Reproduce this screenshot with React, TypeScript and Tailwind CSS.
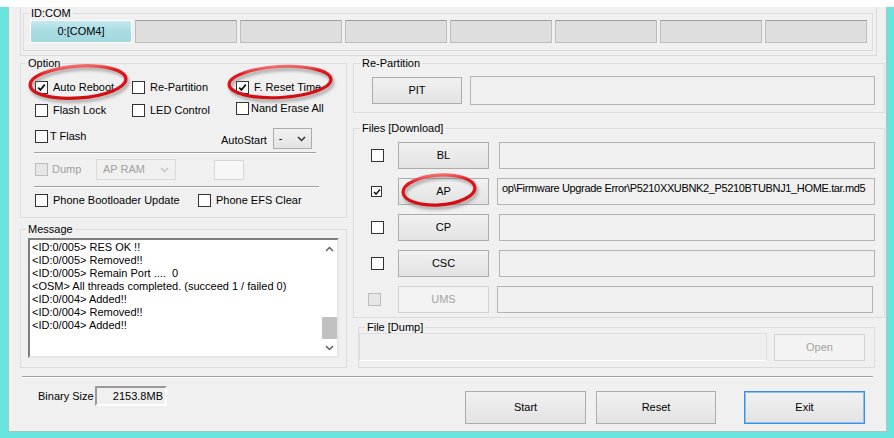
import React from "react";
import clsx from "clsx";

type CheckProps = { checked?: boolean; disabled?: boolean; small?: boolean };

const Check = ({ checked, disabled, small }: CheckProps) => (
  <span
    className={clsx(
      "flex shrink-0 items-center justify-center border",
      small ? "h-[11px] w-[11px]" : "h-[13px] w-[13px]",
      disabled ? "border-[#bcbcbc] bg-[#e6e6e6]" : "border-[#333333] bg-white"
    )}
  >
    {checked && (
      <svg viewBox="0 0 9 9" className={small ? "h-[8px] w-[8px]" : "h-[9px] w-[9px]"}>
        <path d="M1.2 4.6 L3.4 6.9 L7.8 1.6" stroke="#111" strokeWidth="1.7" fill="none" />
      </svg>
    )}
  </span>
);

const CheckLabel = ({
  label,
  checked,
  gap = "gap-[5px]",
  className,
}: {
  label: string;
  checked?: boolean;
  gap?: string;
  className?: string;
}) => (
  <div className={clsx("flex items-center whitespace-nowrap", gap, className)}>
    <Check checked={checked} />
    <span>{label}</span>
  </div>
);

const Btn = ({
  children,
  className,
  disabled,
}: {
  children: React.ReactNode;
  className?: string;
  disabled?: boolean;
}) => (
  <div
    className={clsx(
      "flex shrink-0 items-center justify-center border",
      disabled
        ? "border-[#d2d2d2] bg-[#f3f3f3] text-[#a3a3a3]"
        : "border-[#acacac] bg-linear-to-b from-[#f1f1f1] to-[#e3e3e3]",
      className
    )}
  >
    {children}
  </div>
);

const Field = ({ children, className }: { children?: React.ReactNode; className?: string }) => (
  <div className={clsx("min-w-0 border border-[#b4b4b4] bg-[#f0f0f0]", className)}>{children}</div>
);

const Chevron = ({ color = "#333", up }: { color?: string; up?: boolean }) => (
  <svg viewBox="0 0 9 6" className="h-[6px] w-[9px]">
    <path
      d={up ? "M1 5 L4.5 1.5 L8 5" : "M1 1 L4.5 4.5 L8 1"}
      stroke={color}
      strokeWidth="1.5"
      fill="none"
    />
  </svg>
);

const Legend = ({ children, ml = "ml-[5px]" }: { children: React.ReactNode; ml?: string }) => (
  <legend className={clsx("px-[2px] leading-[12px]", ml)}>{children}</legend>
);

const Etch = ({ width }: { width: string }) => (
  <div className={clsx("h-[2px] border-t border-b border-t-[#a0a0a0] border-b-white", width)} />
);

const messages = [
  "<ID:0/005> RES OK !!",
  "<ID:0/005> Removed!!",
  "<ID:0/005> Remain Port ....  0",
  "<OSM> All threads completed. (succeed 1 / failed 0)",
  "<ID:0/004> Added!!",
  "<ID:0/004> Removed!!",
  "<ID:0/004> Added!!",
];

const files = [
  { name: "BL" },
  { name: "AP", checked: true, path: "op\\Firmware Upgrade Error\\P5210XXUBNK2_P5210BTUBNJ1_HOME.tar.md5" },
  { name: "CP" },
  { name: "CSC" },
  { name: "UMS", disabled: true },
];

const OptionBox = () => (
  <fieldset className="w-full min-w-0 border border-[#dcdcdc]">
    <Legend>Option</Legend>
    <div className="pb-[10px] pl-[14px]">
      <div className="mt-[12px] flex h-[13px] items-center">
        <CheckLabel label="Auto Reboot" checked className="w-[97px]" />
        <CheckLabel label="Re-Partition" className="w-[104px]" />
        <CheckLabel label="F. Reset Time" checked />
      </div>
      <div className="mt-[10px] flex h-[13px] items-center">
        <CheckLabel label="Flash Lock" className="w-[97px]" />
        <CheckLabel label="LED Control" className="w-[104px]" />
        <CheckLabel label="Nand Erase All" gap="gap-[2px]" className="-mt-[4px]" />
      </div>
      <div className="mt-[11px] flex h-[21px] items-start">
        <CheckLabel label="T Flash" gap="gap-[2px]" className="w-[186px]" />
        <div className="flex items-center gap-[6px]">
          <span className="pt-[3px]">AutoStart</span>
          <div className="flex h-[21px] w-[39px] items-center justify-between border border-[#acacac] bg-linear-to-b from-[#f1f1f1] to-[#e3e3e3] pl-[5px] pr-[5px]">
            <span>-</span>
            <Chevron />
          </div>
        </div>
      </div>
      <div className="mt-[3px] -ml-[1px]">
        <Etch width="w-[282px]" />
      </div>
      <div className="mt-[5px] flex h-[21px] items-center">
        <div className="flex w-[61px] items-center gap-[4px] text-[#a0a0a0]">
          <Check disabled />
          <span>Dump</span>
        </div>
        <div className="flex h-[21px] w-[80px] items-center justify-between border border-[#d9d9d9] bg-[#f0f0f0] pl-[6px] pr-[6px] text-[#a0a0a0]">
          <span>AP RAM</span>
          <Chevron color="#c4c4c4" />
        </div>
        <div className="ml-[38px] h-[20px] w-[30px] border border-[#d6d6d6] bg-[#f7f7f7]" />
      </div>
      <div className="mt-[6px] -ml-[1px]">
        <Etch width="w-[285px]" />
      </div>
      <div className="mt-[6px] flex h-[13px] items-center">
        <CheckLabel label="Phone Bootloader Update" className="w-[163px]" />
        <CheckLabel label="Phone EFS Clear" />
      </div>
    </div>
  </fieldset>
);

const MessageBox = () => (
  <fieldset className="mt-[5px] w-full min-w-0 border border-[#dcdcdc]">
    <Legend>Message</Legend>
    <div className="px-[7px] pb-[9px]">
      <div className="mt-[3px] flex h-[120px] w-[311px] border-2 border-t-[#7d7d7d] border-l-[#7d7d7d] border-r-[#e6e6e6] border-b-[#e6e6e6] bg-white">
        <div className="min-w-0 flex-1 overflow-hidden pl-[2px] pt-[1px] leading-[13px] whitespace-pre">
          {messages.map((m, i) => (
            <div key={i}>{m}</div>
          ))}
        </div>
        <div className="flex w-[15px] flex-col bg-white">
          <div className="flex h-[17px] items-center justify-center">
            <Chevron up color="#606060" />
          </div>
          <div className="flex flex-1 flex-col justify-end">
            <div className="h-[22px] bg-[#c1c1c1]" />
          </div>
          <div className="flex h-[17px] items-center justify-center">
            <Chevron color="#606060" />
          </div>
        </div>
      </div>
    </div>
  </fieldset>
);

const RightColumn = () => (
  <div className="flex w-[532px] min-w-0 shrink-0 flex-col">
    <fieldset className="w-full min-w-0 border border-[#dcdcdc]">
      <Legend ml="ml-[6px]">Re-Partition</Legend>
      <div className="mt-[7px] flex h-[29px] items-center pl-[18px] pr-[9px]">
        <Btn className="h-[27px] w-[90px]">PIT</Btn>
        <Field className="ml-[8px] h-[29px] flex-1" />
      </div>
      <div className="h-[7px]" />
    </fieldset>

    <fieldset className="mt-[9px] w-full min-w-0 border border-[#dcdcdc]">
      <Legend ml="ml-[6px]">Files [Download]</Legend>
      <div className="mt-[8px] flex flex-col gap-[9px] pb-[4px] pl-[17px] pr-[9px]">
        {files.map((f) => (
          <div key={f.name} className="flex h-[27px] items-center">
            <div className={clsx("flex shrink-0", f.disabled ? "-ml-[3px] w-[30px]" : "w-[27px]")}>
              <Check checked={f.checked} disabled={f.disabled} small={f.name === "AP"} />
            </div>
            <Btn className="h-[27px] w-[91px]" disabled={f.disabled}>
              {f.name}
            </Btn>
            <Field
              className={clsx(
                "h-[27px] flex-1 overflow-hidden whitespace-nowrap pl-[4px] pt-[3px] leading-[12px] tracking-[-0.35px]",
                f.path || f.disabled ? "ml-[8px]" : "ml-[10px]",
                f.disabled && "mr-[2px]"
              )}
            >
              {f.path}
            </Field>
          </div>
        ))}
      </div>
    </fieldset>

    <fieldset className="mt-[3px] ml-[5px] w-[517px] min-w-0 border border-[#dcdcdc]">
      <Legend ml="ml-[6px]">File [Dump]</Legend>
      <div className="flex h-[28px] items-center pr-[9px]">
        <div className="h-[28px] w-[408px] border border-[#dedede] border-b-white bg-[#efefef]" />
        <Btn className="ml-[7px] h-[27px] w-[91px]" disabled>
          Open
        </Btn>
      </div>
      <div className="h-[6px]" />
    </fieldset>
  </div>
);

const Annotations = () => (
  <svg className="pointer-events-none absolute inset-0" width="894" height="438" viewBox="0 0 894 438">
    <defs>
      <filter id="soft" x="-20%" y="-40%" width="140%" height="180%">
        <feGaussianBlur stdDeviation="1.8" />
      </filter>
      <linearGradient id="ring" x1="0" y1="0" x2="0" y2="1">
        <stop offset="0" stopColor="#f26a6a" />
        <stop offset="0.2" stopColor="#e3161c" />
        <stop offset="1" stopColor="#d30d12" />
      </linearGradient>
    </defs>
    {[
      { cx: 78, cy: 82, rx: 48, ry: 16, r: -4 },
      { cx: 280, cy: 82, rx: 51, ry: 15.5, r: -3 },
      { cx: 439, cy: 190, rx: 36, ry: 15, r: -4 },
    ].map((e, i) => (
      <g key={i} transform={`rotate(${e.r} ${e.cx} ${e.cy})`}>
        <ellipse
          cx={e.cx + 1.5}
          cy={e.cy + 3}
          rx={e.rx}
          ry={e.ry}
          fill="none"
          stroke="#7a7a7a"
          strokeOpacity="0.6"
          strokeWidth="3.5"
          filter="url(#soft)"
        />
        <ellipse cx={e.cx} cy={e.cy} rx={e.rx} ry={e.ry} fill="none" stroke="url(#ring)" strokeWidth="3.2" />
      </g>
    ))}
  </svg>
);

export default function App() {
  return (
    <div className="relative h-[438px] w-[894px] overflow-hidden bg-white pt-[7px] font-['Liberation_Sans',Arial,sans-serif] text-[11px] text-black">
      <div className="h-[431px] bg-[#67e4de] pb-[6px] pl-[8px] pr-[7px]">
        <div className="flex h-full flex-col border-x border-b border-[#a9c4c2] bg-[#f0f0f0]">
          {/* ID:COM */}
          <div className="ml-[11px] w-[857px] border-x border-b border-[#dadada] pb-[4px] pl-[2px]">
            <fieldset className="w-[850px] min-w-0 border border-[#dcdcdc]">
              <Legend>ID:COM</Legend>
              <div className="mt-[1px] grid grid-cols-8 gap-[3px] pb-[7px] pl-[6px] pr-[5px]">
                <div className="flex h-[23px] items-center justify-center border border-white bg-linear-to-b from-[#c2e9ee] via-[#a9dce3] to-[#a2d8df]">
                  0:[COM4]
                </div>
                {Array.from({ length: 7 }).map((_, i) => (
                  <div
                    key={i}
                    className="h-[23px] border border-[#bdbdbd] border-t-[#9d9d9d] bg-[#dedede]"
                  />
                ))}
              </div>
            </fieldset>
          </div>

          {/* options / files */}
          <div className="mt-[1px] flex gap-[6px] pl-[11px]">
            <div className="flex w-[327px] shrink-0 flex-col">
              <OptionBox />
              <MessageBox />
            </div>
            <RightColumn />
          </div>

          <div className="mt-[8px] ml-[13px]">
            <Etch width="w-[851px]" />
          </div>

          {/* bottom bar */}
          <div className="mt-[8px] flex items-start pl-[29px]">
            <div className="flex h-[20px] w-[57px] items-center whitespace-nowrap">Binary Size</div>
            <div className="flex h-[20px] w-[72px] items-center justify-end border-2 border-t-[#9a9a9a] border-l-[#9a9a9a] border-r-white border-b-white pr-[2px]">
              2153.8MB
            </div>
            <Btn className="ml-[298px] mt-[5px] h-[33px] w-[121px]">Start</Btn>
            <Btn className="ml-[10px] mt-[5px] h-[33px] w-[120px]">Reset</Btn>
            <Btn className="ml-[28px] mt-[5px] h-[33px] w-[121px] !border-[#3b8fe5] shadow-[inset_0_0_0_1px_#8ec0ef]">
              Exit
            </Btn>
          </div>
        </div>
      </div>
      <Annotations />
    </div>
  );
}
